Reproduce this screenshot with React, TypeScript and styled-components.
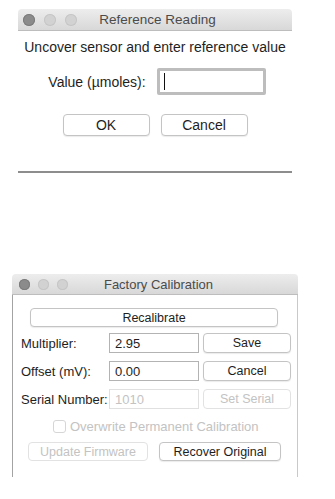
import styled, { createGlobalStyle } from "styled-components";

const GlobalStyle = createGlobalStyle`
  body {
    margin: 0;
    background: #ffffff;
    font-family: "Liberation Sans", Arial, sans-serif;
    color: #1e1e1e;
  }
`;

const Page = styled.div`
  display: flex;
  flex-direction: column;
  padding-top: 9px;
  width: 335px;
  height: 499px;
  box-sizing: border-box;
`;

const Window = styled.div<{ $left: number; $width: number; $gapTop?: number }>`
  margin-left: ${(p) => p.$left}px;
  margin-top: ${(p) => p.$gapTop ?? 0}px;
  width: ${(p) => p.$width}px;
  display: flex;
  flex-direction: column;
`;

const TitleBar = styled.div<{ $height: number; $pad: number }>`
  height: ${(p) => p.$height}px;
  padding-left: ${(p) => p.$pad}px;
  display: grid;
  grid-template-columns: 1fr auto 1fr;
  align-items: center;
  background: linear-gradient(#ededed, #d8d8d8);
  border-bottom: 1px solid #bdbdbd;
  border-radius: 4px 4px 0 0;
  box-sizing: border-box;
`;

const Lights = styled.div<{ $size: number; $gap: number }>`
  display: flex;
  gap: ${(p) => p.$gap}px;
  span {
    width: ${(p) => p.$size}px;
    height: ${(p) => p.$size}px;
    border-radius: 50%;
    background: #d2d2d2;
    box-shadow: inset 0 0 0 1px #c6c6c6;
  }
  span:first-child {
    background: #8b8b8b;
    box-shadow: inset 0 0 0 1px #7c7c7c;
  }
`;

const Title = styled.div<{ $size: number }>`
  font-size: ${(p) => p.$size}px;
  color: #4b4b4b;
`;

/* ---------- Reference Reading ---------- */

const ReadingBody = styled.div`
  height: 140px;
  display: flex;
  flex-direction: column;
  align-items: center;
  border-bottom: 2px solid #8d8d8d;
  font-size: 14px;
`;

const Prompt = styled.div`
  margin-top: 7px;
  line-height: 18px;
`;

const ValueRow = styled.div`
  margin-top: 12px;
  display: flex;
  align-items: center;
  gap: 11px;
  margin-left: 4px;
`;

const FocusInput = styled.div`
  width: 109px;
  height: 27px;
  box-sizing: border-box;
  border: 3px solid #bdbdbd;
  border-radius: 2px;
  background: #ffffff;
  padding: 2px 0 0 4px;
`;

const Caret = styled.span`
  display: block;
  width: 1px;
  height: 17px;
  background: #111;
`;

const ButtonRow = styled.div<{ $top: number; $shift?: number }>`
  margin-top: ${(p) => p.$top}px;
  padding-left: ${(p) => p.$shift ?? 0}px;
  display: flex;
  gap: 11px;
  justify-content: ${(p) => (p.$shift !== undefined ? "flex-start" : "center")};
`;

const Button = styled.div<{ $w: number; $h: number; $size: number; $disabled?: boolean }>`
  width: ${(p) => p.$w}px;
  height: ${(p) => p.$h}px;
  flex-shrink: 0;
  box-sizing: border-box;
  display: flex;
  align-items: center;
  justify-content: center;
  font-size: ${(p) => p.$size}px;
  background: #ffffff;
  border: 1px solid ${(p) => (p.$disabled ? "#e2e2e2" : "#c4c4c4")};
  border-radius: 4px;
  box-shadow: ${(p) => (p.$disabled ? "none" : "0 1px 1px rgba(0,0,0,0.08)")};
  color: ${(p) => (p.$disabled ? "#c3c3c3" : "#1e1e1e")};
`;

/* ---------- Factory Calibration ---------- */

const CalBody = styled.div`
  border-left: 1px solid #a3a3a3;
  border-right: 1px solid #c9c9c9;
  padding: 13px 8px 16px 8px;
  display: flex;
  flex-direction: column;
  font-size: 12.5px;
`;

const WideButton = styled(Button)`
  margin-left: 9px;
`;

const Grid = styled.div`
  margin-top: 6px;
  display: grid;
  grid-template-columns: 84px 90px 88px;
  column-gap: 4px;
  row-gap: 8px;
  align-items: center;
`;

const Label = styled.div`
  font-size: 13px;
  white-space: nowrap;
`;

const Field = styled.div<{ $disabled?: boolean }>`
  height: 20px;
  box-sizing: border-box;
  border: 1px solid ${(p) => (p.$disabled ? "#e0e0e0" : "#b3b3b3")};
  display: flex;
  align-items: center;
  padding-left: 5px;
  font-size: 13px;
  color: ${(p) => (p.$disabled ? "#c3c3c3" : "#1e1e1e")};
`;

const CheckRow = styled.div`
  margin-top: 10px;
  padding-left: 32px;
  display: flex;
  align-items: center;
  gap: 4px;
  color: #c3c3c3;
  font-size: 13px;
`;

const Box = styled.span`
  width: 13px;
  height: 13px;
  box-sizing: border-box;
  border: 1px solid #d6d6d6;
  border-radius: 3px;
`;

export default function App() {
  return (
    <Page>
      <GlobalStyle />
      <Window $left={18} $width={274}>
        <TitleBar $height={22} $pad={5}>
          <Lights $size={12} $gap={9}>
            <span />
            <span />
            <span />
          </Lights>
          <Title $size={13.5}>Reference Reading</Title>
          <div />
        </TitleBar>
        <ReadingBody>
          <Prompt>Uncover sensor and enter reference value</Prompt>
          <ValueRow>
            <span>Value (µmoles):</span>
            <FocusInput>
              <Caret />
            </FocusInput>
          </ValueRow>
          <ButtonRow $top={19}>
            <Button $w={87} $h={22} $size={14}>OK</Button>
            <Button $w={87} $h={22} $size={14}>Cancel</Button>
          </ButtonRow>
        </ReadingBody>
      </Window>

      <Window $left={12} $width={286} $gapTop={101}>
        <TitleBar $height={21} $pad={7}>
          <Lights $size={11} $gap={8}>
            <span />
            <span />
            <span />
          </Lights>
          <Title $size={13}>Factory Calibration</Title>
          <div />
        </TitleBar>
        <CalBody>
          <WideButton $w={248} $h={19} $size={12.5}>Recalibrate</WideButton>
          <Grid>
            <Label>Multiplier:</Label>
            <Field>2.95</Field>
            <Button $w={88} $h={20} $size={12.5}>Save</Button>
            <Label>Offset (mV):</Label>
            <Field>0.00</Field>
            <Button $w={88} $h={20} $size={12.5}>Cancel</Button>
            <Label>Serial Number:</Label>
            <Field $disabled>1010</Field>
            <Button $w={88} $h={20} $size={12.5} $disabled>Set Serial</Button>
          </Grid>
          <CheckRow>
            <Box />
            <span>Overwrite Permanent Calibration</span>
          </CheckRow>
          <ButtonRow $top={8} $shift={7}>
            <Button $w={120} $h={19} $size={12.5} $disabled>Update Firmware</Button>
            <Button $w={122} $h={19} $size={12.5}>Recover Original</Button>
          </ButtonRow>
        </CalBody>
      </Window>
    </Page>
  );
}
